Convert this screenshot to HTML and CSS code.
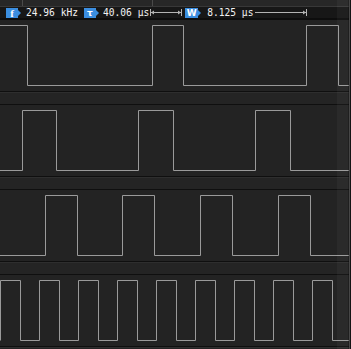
FILE: index.html
```html
<!DOCTYPE html>
<html lang="en">
<head>
    <meta charset="UTF-8">
    <meta name="viewport" content="width=device-width, initial-scale=1.0">
    <title>Logic Analyzer</title>
    <link rel="stylesheet" href="styles.css">
</head>
<body>
    <div class="tela">
        <div class="principal">
            <div class="regua">
                <span class="marca m1"></span>
                <span class="marca m2"></span>
            </div>
            <div class="medidas">
                <span class="tag t-f">f</span>
                <span class="valor v1">24.96 kHz</span>
                <span class="tag t-tau">τ</span>
                <span class="valor v2">40.06 μs</span>
                <svg class="seta s1" width="32" height="11" viewBox="0 0 32 11">
                    <path d="M0.5 2 V9 M31.5 2 V9 M1 5.5 H31" stroke="#b4b4b4" fill="none"/>
                    <path d="M1 5.5 L4 3.5 V7.5 Z M31 5.5 L28 3.5 V7.5 Z" fill="#b4b4b4"/>
                </svg>
                <span class="tag t-w">W</span>
                <span class="valor v3">8.125 μs</span>
                <svg class="seta s2" width="53" height="11" viewBox="0 0 53 11">
                    <path d="M52.5 2 V9 M1 5.5 H52" stroke="#b4b4b4" fill="none"/>
                    <path d="M52 5.5 L49 3.5 V7.5 Z" fill="#b4b4b4"/>
                </svg>
            </div>

            <div class="canal">
                <svg class="onda" width="349" height="71" viewBox="0 0 349 71">
                    <path d="M0 5.5 H27.5 V65.5 H152.5 V5.5 H183.5 V65.5 H306.5 V5.5 H338.5 V65.5 H349"/>
                </svg>
            </div>
            <div class="faixa"></div>
            <div class="canal">
                <svg class="onda" width="349" height="71" viewBox="0 0 349 71">
                    <path d="M0 65.5 H22.5 V5.5 H56.5 V65.5 H138.5 V5.5 H173.5 V65.5 H255.5 V5.5 H290.5 V65.5 H349"/>
                </svg>
            </div>
            <div class="faixa"></div>
            <div class="canal">
                <svg class="onda" width="349" height="71" viewBox="0 0 349 71">
                    <path d="M0 65.5 H45.5 V5.5 H77.5 V65.5 H122.5 V5.5 H154.5 V65.5 H200.5 V5.5 H232.5 V65.5 H278.5 V5.5 H310.5 V65.5 H349"/>
                </svg>
            </div>
            <div class="faixa"></div>
            <div class="canal">
                <svg class="onda" width="349" height="71" viewBox="0 0 349 71">
                    <path d="M0.5 65.5 V5.5 H20.5 V65.5 H39.5 V5.5 H59.5 V65.5 H78.5 V5.5 H98.5 V65.5 H117.5 V5.5 H137.5 V65.5 H156.5 V5.5 H176.5 V65.5 H195.5 V5.5 H215.5 V65.5 H234.5 V5.5 H254.5 V65.5 H273.5 V5.5 H293.5 V65.5 H312.5 V5.5 H332.5 V65.5 H349"/>
                </svg>
            </div>
            <div class="faixa"></div>

            <div class="rolagem"></div>
        </div>
        <div class="borda"></div>
    </div>
</body>
</html>
```
FILE: styles.css
```css
body{
    margin: 0;
    background-color: #111;
    overflow: hidden;
}
div.tela{
    display: flex;
    width: 351px;
    height: 349px;
    overflow: hidden;
}
div.principal{
    position: relative;
    width: 349px;
    background-color: #232323;
    display: flex;
    flex-direction: column;
    flex-shrink: 0;
}
div.borda{
    width: 1px;
    background-color: #474747;
    border-right: 1px solid #141414;
}
div.regua{
    height: 6px;
    background-color: #272727;
    border-bottom: 1px solid #383838;
    display: flex;
}
span.marca{
    width: 1px;
    height: 6px;
    background-color: #4a4a4a;
}
span.m1{
    margin-left: 22px;
}
span.m2{
    margin-left: 129px;
}
div.medidas{
    height: 11px;
    background-color: #171717;
    border-bottom: 2px solid #0d0d0d;
    display: flex;
    align-items: center;
    padding-left: 6px;
    font-family: "DejaVu Sans Mono", monospace;
    font-size: 9.6px;
    color: #f2f2f2;
}
span.tag{
    position: relative;
    width: 12px;
    height: 10px;
    margin-right: 3px;
    background-color: #3b8ee0;
    color: #fff;
    font-weight: bold;
    text-align: center;
    line-height: 10px;
    font-size: 10px;
}
span.tag::after{
    content: "";
    position: absolute;
    left: 12px;
    top: 2px;
    border-left: 3px solid #3b8ee0;
    border-top: 3px solid transparent;
    border-bottom: 3px solid transparent;
}
span.t-f{
    font-family: "Liberation Serif", serif;
    font-size: 11px;
}
span.t-tau{
    margin-left: 6px;
    font-family: "DejaVu Sans", sans-serif;
    font-size: 9px;
}
span.t-w{
    margin-left: 3px;
    width: 13px;
    font-family: "DejaVu Sans", sans-serif;
    font-size: 9px;
}
span.t-w::after{
    left: 13px;
}
span.valor{
    margin-left: 5px;
    line-height: 11px;
}
span.v2{
    margin-left: 4px;
}
span.v3{
    margin-left: 6px;
}
svg.seta{
    margin-left: 1px;
    flex-shrink: 0;
}
div.canal{
    height: 71px;
    border-bottom: 1px solid #0f0f0f;
}
svg.onda{
    display: block;
}
svg.onda path{
    fill: none;
    stroke: #9a9a9a;
    stroke-width: 1;
}
div.faixa{
    height: 11px;
    flex-shrink: 0;
    background-color: #242424;
    border-top: 1px solid #2e2e2e;
    border-bottom: 1px solid #0f0f0f;
}
div.rolagem{
    position: absolute;
    top: 0;
    left: 337px;
    width: 11px;
    height: 349px;
    background-color: rgba(255, 255, 255, 0.035);
    border-right: 1px solid rgba(0, 0, 0, 0.25);
}
```
